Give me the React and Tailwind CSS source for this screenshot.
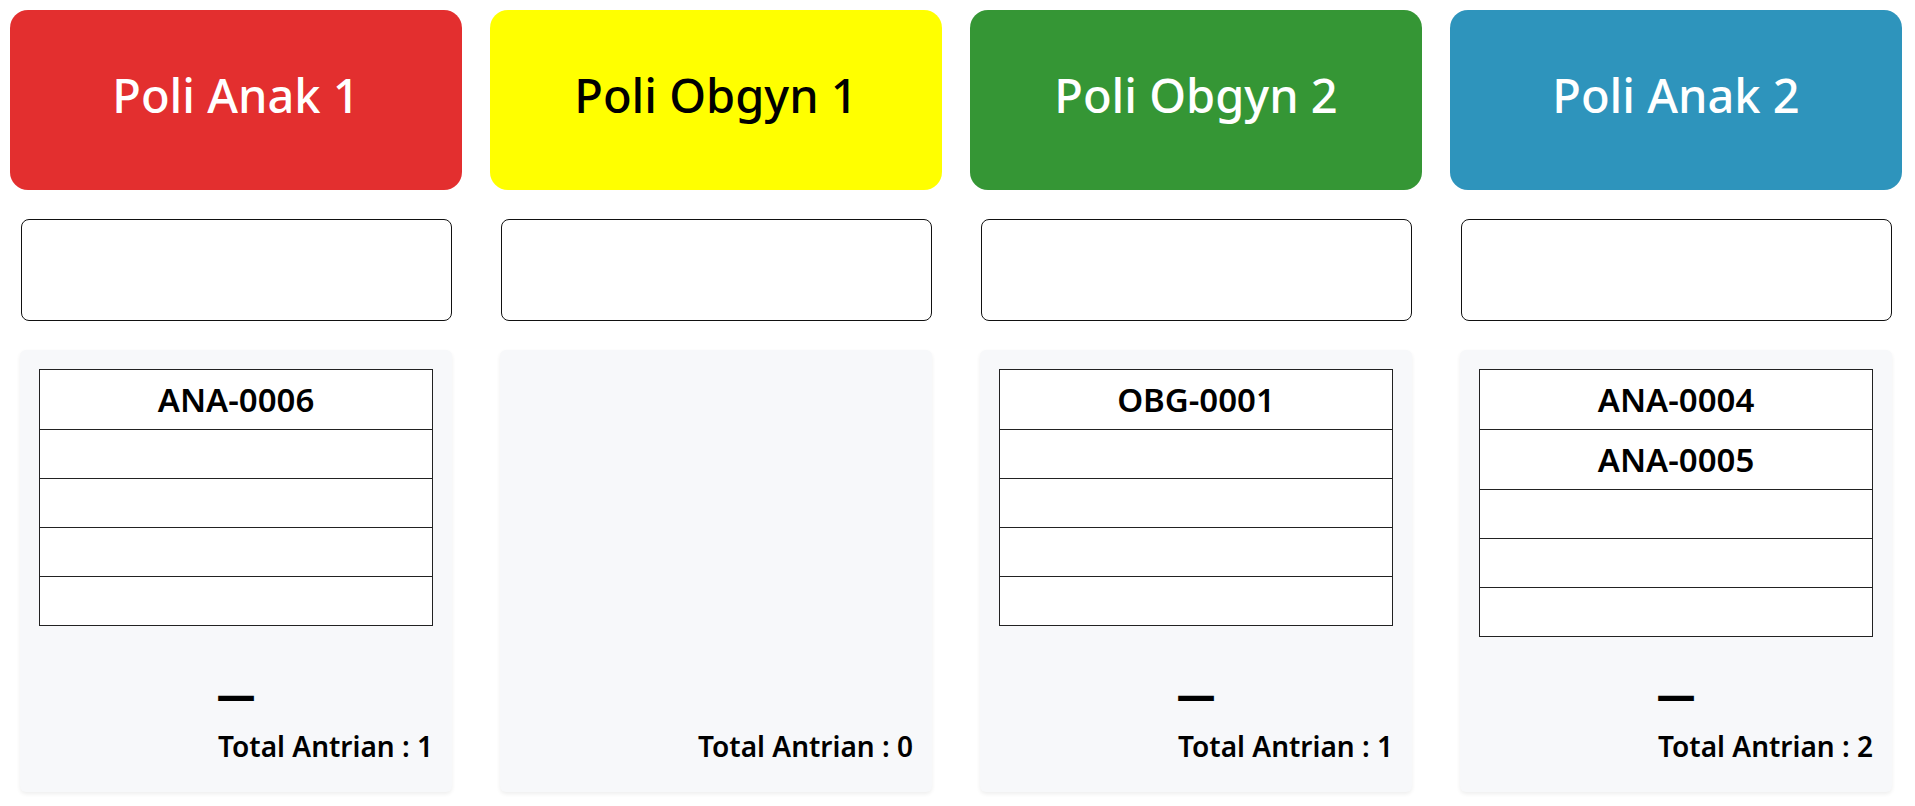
import React from "react";

const polis = [
  { name: "Poli Anak 1", bg: "bg-[#e32f2f]", text: "text-white", items: ["ANA-0006"], table: true, total: 1 },
  { name: "Poli Obgyn 1", bg: "bg-[#ffff00]", text: "text-black", items: [], table: false, total: 0 },
  { name: "Poli Obgyn 2", bg: "bg-[#359635]", text: "text-white", items: ["OBG-0001"], table: true, total: 1 },
  { name: "Poli Anak 2", bg: "bg-[#2e94bc]", text: "text-white", items: ["ANA-0004", "ANA-0005"], table: true, total: 2 },
];

function Column({ p }) {
  const rows = [0, 1, 2, 3, 4].map((i) => p.items[i] || null);
  return (
    <div className="flex flex-col">
      <div className={`h-[180px] rounded-[18px] ${p.bg} ${p.text} flex items-center justify-center pb-[9px]`}>
        <span className="text-[47px] leading-none font-medium">{p.name}</span>
      </div>
      <div className="mt-[29px] ml-[11px] mr-[10px] h-[102px] rounded-[8px] border border-[#111] bg-white" />
      <div className="mt-[29px] mx-[10px] h-[442px] rounded-md bg-[#f7f8fa] shadow-[0_2px_4px_rgba(0,0,0,0.07)] flex flex-col px-[19px] pt-[19px] pb-[29px]">
        {p.table && (
          <div className="border-x border-t border-[#222] bg-white">
            {rows.map((r, i) => (
              <div
                key={i}
                className={`border-b border-[#222] flex items-center justify-center ${r ? "h-[60px]" : "h-[49px]"}`}
              >
                {r && <span className="text-[33px] leading-none font-semibold text-black">{r}</span>}
              </div>
            ))}
          </div>
        )}
        <div className="mt-auto flex flex-col">
          {p.table && (
            <div className="h-[40px] mb-[13px] flex items-center justify-center">
              <span className="text-[40px] leading-none font-bold text-black" style={{ fontFamily: '"DejaVu Sans", sans-serif' }}>—</span>
            </div>
          )}
          <div className="h-[34px] leading-[34px] text-right text-[28px] font-[560] text-black">
            Total Antrian : {p.total}
          </div>
        </div>
      </div>
    </div>
  );
}

export default function App() {
  return (
    <div
      className="w-[1915px] h-[806px] bg-white grid grid-cols-4 gap-x-[28px] pl-[10px] pr-[13px] pt-[10px]"
      style={{ fontFamily: '"Noto Sans", "Open Sans", sans-serif' }}
    >
      {polis.map((p) => (
        <Column key={p.name} p={p} />
      ))}
    </div>
  );
}
